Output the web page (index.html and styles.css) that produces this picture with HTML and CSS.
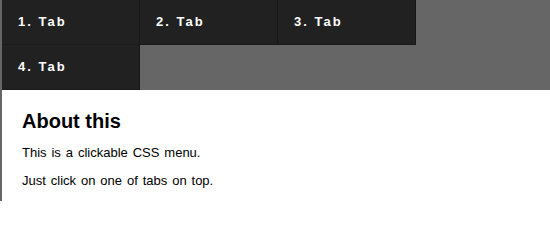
FILE: index.html
```html
<!DOCTYPE html>
<html>
<head>
<meta charset="utf-8">
<title>Tabs</title>
<link rel="stylesheet" href="styles.css">
</head>
<body>
<div class="page">
  <nav class="tabs">
    <a class="tab" href="#">1. Tab</a>
    <a class="tab" href="#">2. Tab</a>
    <a class="tab" href="#">3. Tab</a>
    <a class="tab" href="#">4. Tab</a>
  </nav>
  <div class="content">
    <h2 class="title">About this</h2>
    <p class="text">This is a clickable CSS menu.</p>
    <p class="text">Just click on one of tabs on top.</p>
  </div>
</div>
</body>
</html>
```

FILE: styles.css
```css
html, body {
  margin: 0;
  padding: 0;
  background: #fff;
}

.page {
  border-left: 2px solid #666;
  min-height: 201px;
  box-sizing: border-box;
  font-family: "Liberation Sans", Arial, sans-serif;
}

.tabs {
  display: flex;
  flex-wrap: wrap;
  background: #666;
  width: 100%;
  padding-right: 132px;
  box-sizing: border-box;
}

.tab {
  display: block;
  width: 138px;
  height: 44px;
  line-height: 44px;
  box-sizing: content-box;
  background: #212121;
  border-right: 1px solid #181818;
  border-bottom: 1px solid #1a1a1a;
  box-sizing: border-box;
  height: 45px;
  padding-left: 16px;
  color: #fff;
  font-size: 13px;
  font-weight: bold;
  letter-spacing: 2px;
  text-decoration: none;
}

.content {
  padding: 20px 20px 0 20px;
  color: #000;
}

.title {
  margin: 0 0 12px 0;
  font-size: 20px;
  line-height: 23px;
  font-weight: bold;
}

.text {
  margin: 0 0 13px 0;
  font-size: 13px;
  line-height: 15px;
  word-spacing: 1.3px;
}
```
